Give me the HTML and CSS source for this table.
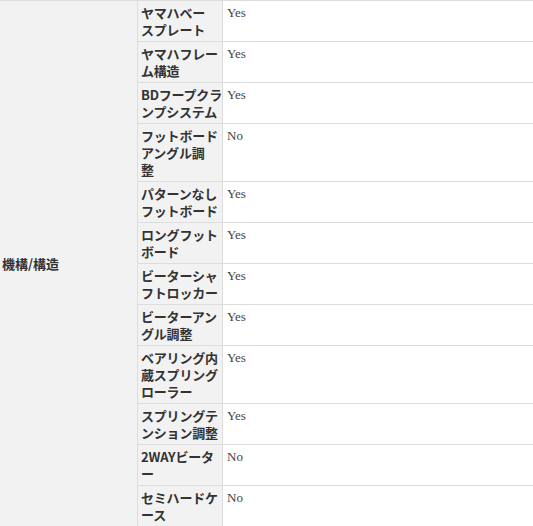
FILE: index.html
```html
<!DOCTYPE html>
<html lang="ja">
<head>
    <meta charset="UTF-8">
    <title>機構/構造</title>
    <link rel="stylesheet" href="styles.css">
</head>
<body>

    <table class="spec-table">
        <colgroup>
            <col class="col-group">
            <col class="col-name">
            <col class="col-value">
        </colgroup>
        <tbody>
            <tr>
                <th class="group" rowspan="12">機構/構造</th>
                <th class="name">ヤマハベー<br>スプレート</th>
                <td class="value">Yes</td>
            </tr>
            <tr>
                <th class="name">ヤマハフレー<br>ム構造</th>
                <td class="value">Yes</td>
            </tr>
            <tr>
                <th class="name">BDフープクラ<br>ンプシステム</th>
                <td class="value">Yes</td>
            </tr>
            <tr>
                <th class="name">フットボード<br>アングル調<br>整</th>
                <td class="value">No</td>
            </tr>
            <tr>
                <th class="name">パターンなし<br>フットボード</th>
                <td class="value">Yes</td>
            </tr>
            <tr>
                <th class="name">ロングフット<br>ボード</th>
                <td class="value">Yes</td>
            </tr>
            <tr>
                <th class="name">ビーターシャ<br>フトロッカー</th>
                <td class="value">Yes</td>
            </tr>
            <tr>
                <th class="name">ビーターアン<br>グル調整</th>
                <td class="value">Yes</td>
            </tr>
            <tr>
                <th class="name">ベアリング内<br>蔵スプリング<br>ローラー</th>
                <td class="value">Yes</td>
            </tr>
            <tr>
                <th class="name">スプリングテ<br>ンション調整</th>
                <td class="value">Yes</td>
            </tr>
            <tr>
                <th class="name">2WAYビータ<br>ー</th>
                <td class="value">No</td>
            </tr>
            <tr>
                <th class="name">セミハードケ<br>ース</th>
                <td class="value">No</td>
            </tr>
        </tbody>
    </table>

</body>
</html>
```

FILE: styles.css
```css
body {
    margin: 0;
    background-color: #fff;
    font-family: "Noto Sans CJK JP", sans-serif;
    font-size: 13px;
    color: #333;
}

.spec-table {
    width: 533px;
    border-collapse: separate;
    border-spacing: 0;
    border-top: 1px solid #ddd;
    table-layout: fixed;
}

.col-group {
    width: 138px;
}

.col-name {
    width: 85px;
}

.spec-table th,
.spec-table td {
    box-sizing: border-box;
    padding: 3px 3px;
    line-height: 17px;
    text-align: left;
    vertical-align: top;
    border-bottom: 1px solid #ddd;
    white-space: nowrap;
}

.spec-table th {
    background-color: #f2f2f2;
    font-weight: 700;
    border-right: 1px solid #ddd;
}

.spec-table th.group {
    vertical-align: middle;
    padding-left: 2px;
}

.spec-table th.name {
    padding-right: 0;
    letter-spacing: -0.2px;
}

.spec-table td.value {
    font-family: "Liberation Serif", serif;
    color: #444;
    padding-left: 4px;
}
```
